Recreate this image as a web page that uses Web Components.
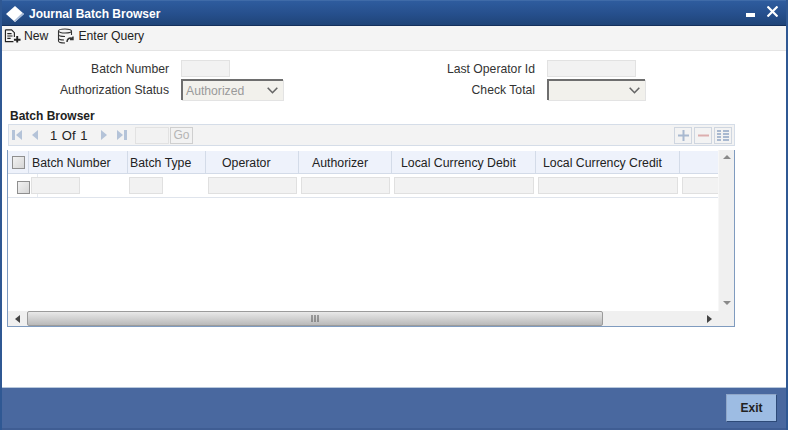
<!DOCTYPE html>
<html>
<head>
<meta charset="utf-8">
<title>Journal Batch Browser</title>
<style>
    html, body { margin: 0; padding: 0; background: #fff; }
    body { font: 12px "Liberation Sans", Arial, sans-serif; color: #222; }
</style>
</head>
<body>
<journal-window>
    <title-bar slot="title">Journal Batch Browser</title-bar>
    <action-bar slot="actions"></action-bar>
    <batch-filter slot="filter"></batch-filter>
    <batch-browser slot="browser"></batch-browser>
    <exit-footer slot="footer"></exit-footer>
</journal-window>

<script>
class JournalWindow extends HTMLElement {
    constructor() {
        super();
        this.shadow = this.attachShadow({mode: 'open'});
    }

    connectedCallback() {
        this.shadow.innerHTML = `
            <style>
                :host {
                    display: flex;
                    flex-direction: column;
                    width: 788px;
                    height: 430px;
                    box-sizing: border-box;
                    overflow: hidden;
                    background: #fff;
                    border-left: 2px solid #2f5893;
                    border-right: 2px solid #2f5893;
                }
                .body {
                    flex: 1;
                    display: flex;
                    flex-direction: column;
                    min-height: 0;
                }
            </style>
            <slot name="title"></slot>
            <slot name="actions"></slot>
            <div class="body">
                <slot name="filter"></slot>
                <slot name="browser"></slot>
            </div>
            <slot name="footer"></slot>
        `;
    }
}

class TitleBar extends HTMLElement {
    constructor() {
        super();
        this.shadow = this.attachShadow({mode: 'open'});
    }

    connectedCallback() {
        this.shadow.innerHTML = `
            <style>
                :host {
                    display: flex;
                    align-items: center;
                    height: 26px;
                    box-sizing: border-box;
                    margin: 0 -2px;
                    padding: 2px 10px 0 6px;
                    color: #fff;
                    font: bold 12px "Liberation Sans", Arial, sans-serif;
                    background: linear-gradient(#2e5c9e, #264f8c 55%, #1f4478);
                    border-top: 1px solid #3f6ba8;
                    border-bottom: 1px solid #14305c;
                }
                .logo { margin-right: 5px; }
                .text { flex: 1; }
                .min { display: block; margin-right: 12px; margin-top: 2px; }
                .close { display: block; margin-top: -6px; }
            </style>
            <svg class="logo" width="18" height="16" viewBox="0 0 18 16">
                <path d="M9 0 L18 8 L9 16 L0 8 Z" fill="#fff"/>
                <path d="M9 16 L18 8 L16.5 6.7 L8 14.8 Z" fill="#a9bcd8"/>
            </svg>
            <span class="text"><slot></slot></span>
            <svg class="min" width="9" height="5" viewBox="0 0 9 5"><rect x="0" y="0" width="9" height="4" fill="#fff"/></svg>
            <svg class="close" width="11" height="11" viewBox="0 0 11 11"><path d="M0.5 0.5 L10.5 10.5 M10.5 0.5 L0.5 10.5" stroke="#fff" stroke-width="2.2"/></svg>
        `;
    }
}

class ActionBar extends HTMLElement {
    constructor() {
        super();
        this.shadow = this.attachShadow({mode: 'open'});
    }

    connectedCallback() {
        this.shadow.innerHTML = `
            <style>
                :host {
                    display: flex;
                    align-items: center;
                    gap: 9px;
                    height: 25px;
                    box-sizing: border-box;
                    padding: 0 2px 4px 2px;
                    background: #f4f4f4;
                    border-bottom: 1px solid #e4e4e4;
                    color: #222;
                    font: 12.2px "Liberation Sans", Arial, sans-serif;
                }
                .item { display: flex; align-items: center; gap: 3px; }
                svg { display: block; }
            </style>
            <span class="item">
                <svg width="17" height="16" viewBox="0 0 18 16" fill="none" stroke="#222" stroke-width="1.2">
                    <path d="M1.5 1.5 H8 L11 4.5 V9 M1.5 1.5 V14 H10"/>
                    <path d="M3.5 5.5 H8 M3.5 8 H9 M3.5 10.5 H7"/>
                    <path d="M14 8 V15 M10.5 12 H17.5" stroke-width="2"/>
                </svg>
                New
            </span>
            <span class="item">
                <svg width="18" height="17" viewBox="0 0 18 17" fill="none" stroke="#333" stroke-width="1.1">
                    <ellipse cx="8" cy="3" rx="6.5" ry="2"/>
                    <path d="M1.5 3 V13 C1.5 14.5 5 15 8 15 M14.5 3 V7"/>
                    <path d="M1.5 6.5 C1.5 8 5 8.5 8 8.5 M1.5 10 C1.5 11.5 5 12 7 12"/>
                    <path d="M10 14 C10 10 14 9 16 11 M16 8.5 V11.5 H13" stroke-width="1.4"/>
                </svg>
                Enter Query
            </span>
        `;
    }
}

class FormField extends HTMLElement {
    constructor() {
        super();
        this.shadow = this.attachShadow({mode: 'open'});
    }

    connectedCallback() {
        const label = this.getAttribute('label');
        const width = this.getAttribute('width');
        const select = this.hasAttribute('select');
        const value = this.getAttribute('value') || '';
        this.shadow.innerHTML = `
            <style>
                :host {
                    display: grid;
                    grid-template-columns: var(--label-width) auto;
                    column-gap: 12px;
                    align-items: center;
                    justify-content: start;
                    font: 12.2px "Liberation Sans", Arial, sans-serif;
                    color: #333;
                }
                .label { text-align: right; white-space: nowrap; }
                .input {
                    box-sizing: border-box;
                    height: 17px;
                    background: #f2f2f2;
                    border: 1px solid #e2e2e2;
                }
                .select {
                    display: flex;
                    align-items: center;
                    justify-content: space-between;
                    box-sizing: border-box;
                    height: 21px;
                    padding: 0 5px 0 3px;
                    color: #9a9a9a;
                    background: #f2f1ec;
                    border-style: solid;
                    border-width: 2px 0 0 2px;
                    border-color: #6e6e6e;
                    box-shadow: 1px 1px 0 #e3e3e3;
                }
                svg { display: block; }
            </style>
            <span class="label">${label}</span>
            ${select
                ? `<span class="select" style="width:${width}px"><span>${value}</span>
                     <svg width="11" height="7" viewBox="0 0 11 7"><path d="M0.7 0.7 L5.5 5.7 L10.3 0.7" fill="none" stroke="#666" stroke-width="1.6"/></svg></span>`
                : `<span class="input" style="width:${width}px"></span>`}
        `;
    }
}

class BatchFilter extends HTMLElement {
    constructor() {
        super();
        this.shadow = this.attachShadow({mode: 'open'});
    }

    connectedCallback() {
        this.shadow.innerHTML = `
            <style>
                :host {
                    display: grid;
                    grid-template-columns: 366px auto;
                    grid-template-rows: 17px 21px;
                    row-gap: 2px;
                    justify-content: start;
                    align-items: center;
                    padding-top: 9px;
                }
                .left { --label-width: 167px; }
                .right { --label-width: 167px; }
            </style>
            <form-field class="left" label="Batch Number" width="49"></form-field>
            <form-field class="right" label="Last Operator Id" width="89"></form-field>
            <form-field class="left" label="Authorization Status" width="102" select value="Authorized"></form-field>
            <form-field class="right" label="Check Total" width="98" select></form-field>
        `;
    }
}

class PagerBar extends HTMLElement {
    constructor() {
        super();
        this.shadow = this.attachShadow({mode: 'open'});
    }

    connectedCallback() {
        this.shadow.innerHTML = `
            <style>
                :host {
                    display: flex;
                    align-items: center;
                    height: 22px;
                    box-sizing: border-box;
                    padding: 0 2px 0 1px;
                    background: #f3f3f3;
                    border: 1px solid #d5dde8;
                    color: #222;
                    font: 13px "Liberation Sans", Arial, sans-serif;
                }
                svg { display: block; }
                .nav { display: flex; align-items: center; }
                .count { margin: 1px 0 0 9px; width: 48px; word-spacing: 1px; white-space: pre; }
                .page { box-sizing: border-box; width: 34px; height: 17px; background: #f2f2f2; border: 1px solid #e2e2e2; margin-left: 4px; }
                .go {
                    box-sizing: border-box; width: 23px; height: 17px; margin-left: 1px;
                    color: #b5b5b5; font-size: 12px; text-align: center; line-height: 15px;
                    background: #f2f2f2; border: 1px solid #cfcfcf;
                }
                .spacer { flex: 1; }
                .tool {
                    box-sizing: border-box; width: 18px; height: 17px; margin-left: 2px;
                    background: #f3f3f3; border: 1px solid #cfd6e0;
                    display: flex; align-items: center; justify-content: center;
                }
            </style>
            <span class="nav">
                <svg width="16" height="12" viewBox="0 0 16 12"><rect x="2" y="1" width="3" height="10" fill="#b4c3d8"/><path d="M12 1 V11 L6 6 Z" fill="#b4c3d8"/></svg>
                <svg width="12" height="12" viewBox="0 0 12 12" style="margin-left:3px"><path d="M9 1 V11 L3 6 Z" fill="#b4c3d8"/></svg>
            </span>
            <span class="count">1 Of 1</span>
            <span class="nav">
                <svg width="12" height="12" viewBox="0 0 12 12"><path d="M3 1 V11 L9 6 Z" fill="#b4c3d8"/></svg>
                <svg width="16" height="12" viewBox="0 0 16 12" style="margin-left:5px"><path d="M2 1 V11 L8 6 Z" fill="#b4c3d8"/><rect x="9" y="1" width="3" height="10" fill="#b4c3d8"/></svg>
            </span>
            <span class="page"></span>
            <span class="go">Go</span>
            <span class="spacer"></span>
            <span class="tool"><svg width="13" height="13" viewBox="0 0 13 13"><path d="M6.5 1 V12 M1 6.5 H12" stroke="#a9b9d0" stroke-width="2"/></svg></span>
            <span class="tool"><svg width="13" height="13" viewBox="0 0 13 13"><path d="M1 6.5 H12" stroke="#dcaeae" stroke-width="2"/></svg></span>
            <span class="tool"><svg width="14" height="13" viewBox="0 0 14 13"><path d="M1 2 H5 M7 2 H13 M1 5 H5 M7 5 H13 M1 8 H5 M7 8 H13 M1 11 H5 M7 11 H13" stroke="#a9b9d0" stroke-width="2"/></svg></span>
        `;
    }
}

const COLUMNS = [
    {name: 'Batch Number', width: 99, input: [2, 49], pad: 3},
    {name: 'Batch Type', width: 78, input: [1, 34], pad: 2},
    {name: 'Operator', width: 93, input: [2, 89], pad: 16},
    {name: 'Authorizer', width: 93, input: [2, 89], pad: 13},
    {name: 'Local Currency Debit', width: 144, input: [2, 140], pad: 9},
    {name: 'Local Currency Credit', width: 144, input: [2, 140], pad: 7},
    {name: '', width: 39, input: [2, 37], pad: 0}
];

class BatchGrid extends HTMLElement {
    constructor() {
        super();
        this.shadow = this.attachShadow({mode: 'open'});
    }

    connectedCallback() {
        const head = COLUMNS.map(c => `<div class="th" style="width:${c.width}px;padding-left:${c.pad}px">${c.name}</div>`).join('');
        const row = COLUMNS.map(c => `<div class="td" style="width:${c.width}px"><span class="cell" style="margin-left:${c.input[0]}px;width:${c.input[1]}px"></span></div>`).join('');
        this.shadow.innerHTML = `
            <style>
                :host {
                    display: grid;
                    grid-template-columns: 710px 16px;
                    grid-template-rows: 160px 15px;
                    box-sizing: border-box;
                    width: 728px;
                    height: 177px;
                    margin-top: 4px;
                    padding-top: 1px;
                    border: 1px solid #7f9bbf;
                    border-top: 0;
                    font: 12.3px "Liberation Sans", Arial, sans-serif;
                    color: #222;
                    background: #fff;
                }
                .view { overflow: hidden; }
                .row { display: flex; width: 710px; overflow: hidden; }
                .head { height: 23px; box-sizing: border-box; background: #eef2fb; border-bottom: 1px solid #d3dbe8; }
                .body {
                    height: 24px; box-sizing: border-box; border-bottom: 1px solid #dfe4ec;
                    background: linear-gradient(#e6eaf0, #e6eaf0) 29px 0 / 1px 100% no-repeat;
                }
                .th {
                    flex: none; box-sizing: border-box; line-height: 24px;
                    border-right: 1px solid #d3dbe8; white-space: nowrap;
                }
                .td { flex: none; box-sizing: border-box; padding-top: 3px; }
                .cell { display: block; box-sizing: border-box; height: 17px; background: #f2f2f2; border: 1px solid #e0e0e0; }
                .check { flex: none; box-sizing: border-box; width: 21px; }
                .head .check { border-right: 1px solid #d3dbe8; padding: 5px 0 0 4px; }
                .body .check { padding: 7px 0 0 9px; }
                .box {
                    display: block; box-sizing: border-box; width: 13px; height: 13px;
                    border: 1px solid #8f8f8f;
                    background: linear-gradient(135deg, #f2f2f2, #d6d6d6);
                }
                .vbar {
                    background: #f0f0f0; display: flex; flex-direction: column;
                    justify-content: space-between; align-items: center; padding: 5px 0 6px; box-sizing: border-box;
                    border-left: 1px solid #f7f7f7; margin-top: -1px;
                }
                .hbar {
                    display: flex; align-items: center; background: #f0f0f0; box-sizing: border-box;
                }
                .arrow { flex: none; width: 18px; display: flex; justify-content: center; }
                .thumb {
                    flex: none; box-sizing: border-box; width: 576px; height: 15px; margin-left: 1px;
                    border: 1px solid #9b9b9b; border-radius: 2px;
                    background: linear-gradient(#e9e9e9, #cfcfcf 55%, #b9b9b9);
                    display: flex; align-items: center; justify-content: center;
                }
                .fill { flex: 1; }
                .corner { background: #f0f0f0; }
                svg { display: block; }
            </style>
            <div class="view">
                <div class="row head">
                    <div class="check"><span class="box"></span></div>${head}
                </div>
                <div class="row body">
                    <div class="check"><span class="box"></span></div>${row}
                </div>
            </div>
            <div class="vbar">
                <svg width="8" height="4" viewBox="0 0 8 4"><path d="M4 0 L8 4 H0 Z" fill="#8a8a8a"/></svg>
                <svg width="8" height="4" viewBox="0 0 8 4"><path d="M0 0 H8 L4 4 Z" fill="#8a8a8a"/></svg>
            </div>
            <div class="hbar">
                <span class="arrow"><svg width="5" height="8" viewBox="0 0 5 8"><path d="M5 0 V8 L0 4 Z" fill="#444"/></svg></span>
                <span class="thumb"><svg width="9" height="7" viewBox="0 0 9 7"><path d="M1 0 V7 M4 0 V7 M7 0 V7" stroke="#555" stroke-width="1"/></svg></span>
                <span class="fill"></span>
                <span class="arrow"><svg width="5" height="8" viewBox="0 0 5 8"><path d="M0 0 V8 L5 4 Z" fill="#444"/></svg></span>
            </div>
            <div class="corner"></div>
        `;
    }
}

class BatchBrowser extends HTMLElement {
    constructor() {
        super();
        this.shadow = this.attachShadow({mode: 'open'});
    }

    connectedCallback() {
        this.shadow.innerHTML = `
            <style>
                :host {
                    display: block;
                    width: 728px;
                    padding: 9px 0 0 5px;
                }
                h2 {
                    margin: 0 0 1px 3px;
                    font: bold 12px/14px "Liberation Sans", Arial, sans-serif;
                    color: #222;
                }
                pager-bar { margin-left: 1px; }
            </style>
            <h2>Batch Browser</h2>
            <pager-bar></pager-bar>
            <batch-grid></batch-grid>
        `;
    }
}

class ExitFooter extends HTMLElement {
    constructor() {
        super();
        this.shadow = this.attachShadow({mode: 'open'});
    }

    connectedCallback() {
        this.shadow.innerHTML = `
            <style>
                :host {
                    display: flex;
                    justify-content: flex-end;
                    align-items: flex-start;
                    height: 43px;
                    box-sizing: border-box;
                    margin: 0 -2px;
                    padding: 6px 11px 0 0;
                    background: #49689f;
                    border-top: 1px solid #b8c8dc;
                    border-bottom: 2px solid #3f5d93;
                }
                button {
                    width: 51px;
                    height: 28px;
                    padding: 0;
                    font: bold 12px "Liberation Sans", Arial, sans-serif;
                    color: #222;
                    background: #9dbce3;
                    border: 1px solid;
                    border-color: #8fa6c8 #2d4a78 #2d4a78 #8fa6c8;
                }
            </style>
            <button>Exit</button>
        `;
    }
}

customElements.define('journal-window', JournalWindow);
customElements.define('title-bar', TitleBar);
customElements.define('action-bar', ActionBar);
customElements.define('form-field', FormField);
customElements.define('batch-filter', BatchFilter);
customElements.define('pager-bar', PagerBar);
customElements.define('batch-grid', BatchGrid);
customElements.define('batch-browser', BatchBrowser);
customElements.define('exit-footer', ExitFooter);
</script>
</body>
</html>
